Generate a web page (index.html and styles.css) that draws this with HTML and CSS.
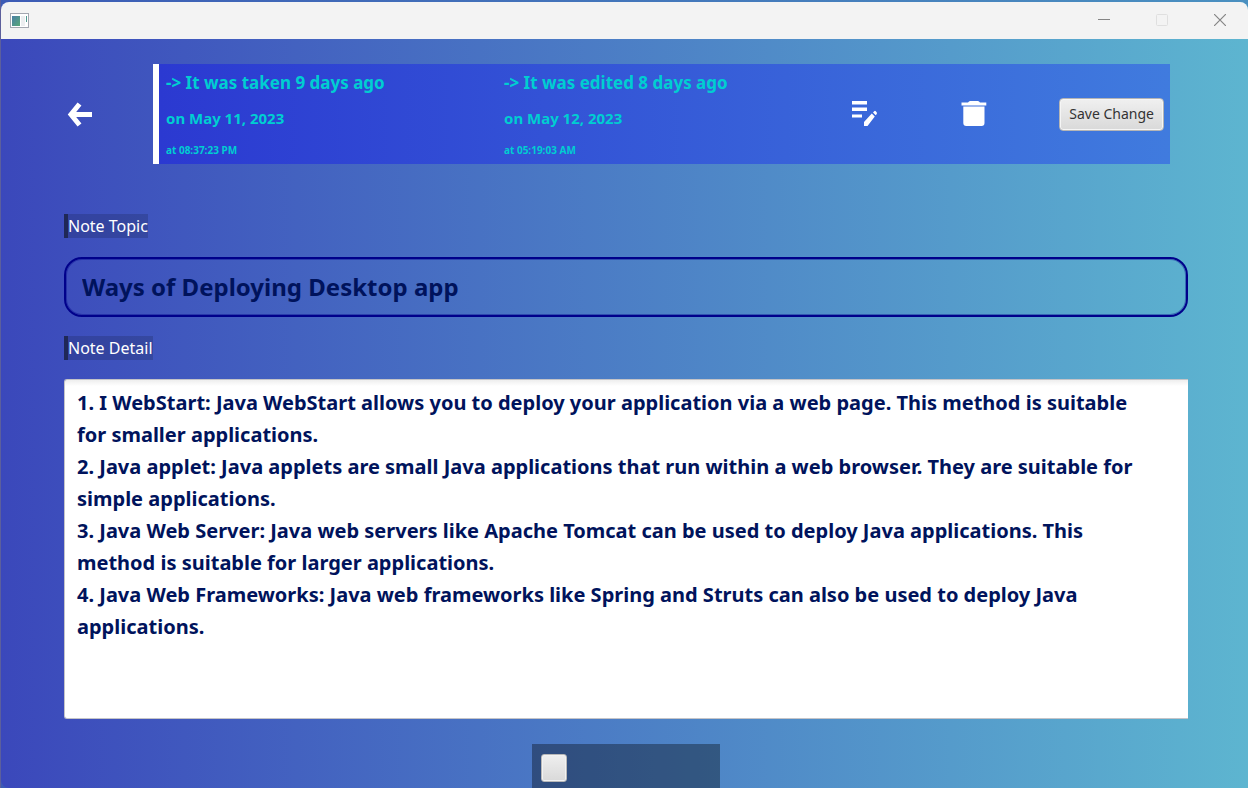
FILE: index.html
```html
<!DOCTYPE html>
<html lang="en">
<head>
<meta charset="utf-8">
<title>Note</title>
<link rel="stylesheet" href="styles.css">
</head>
<body>
<div class="window">
  <header class="titlebar">
    <svg class="app-icon" width="20" height="17" viewBox="0 0 20 17" aria-hidden="true">
      <defs><linearGradient id="pane" x1="0" y1="0" x2="1" y2="1"><stop offset="0" stop-color="#4a7fa5"/><stop offset="1" stop-color="#58a878"/></linearGradient></defs>
      <rect x=".5" y="1.500" width="18" height="14" fill="#fff" stroke="#a3a7b0"/>
      <rect x="2" y="4" width="8" height="10" fill="url(#pane)"/>
      <rect x="11" y="4" width="4" height="10" fill="#eceef0"/>
      <rect x="16" y="4" width="1" height="6" fill="#4f9a90"/>
    </svg>
    <div class="window-controls">
      <button type="button" aria-label="Minimize"><svg width="12" height="12" viewBox="0 0 12 12"><path d="M0 5.500H12" stroke="#858585"/></svg></button>
      <button type="button" aria-label="Maximize" disabled><svg width="12" height="12" viewBox="0 0 12 12"><rect x=".5" y=".5" width="11" height="11" rx="1" fill="none" stroke="#dfdfdf"/></svg></button>
      <button type="button" aria-label="Close"><svg width="12" height="12" viewBox="0 0 12 12"><path d="M0 0L12 12M12 0L0 12" stroke="#858585" stroke-width="1.200"/></svg></button>
    </div>
  </header>
  <main class="content">
    <div class="toolbar">
      <button class="icon-button" type="button" aria-label="Back">
        <svg width="26" height="26" viewBox="0 0 26 26"><path d="M25 13.500H5M12.500 3L4 13.500L12.500 24" fill="none" stroke="#fff" stroke-width="5"/></svg>
      </button>
      <section class="info">
        <div class="stamp">
          <p class="ago">-&gt; It was taken 9 days ago</p>
          <p class="date">on May 11, 2023</p>
          <p class="time">at 08:37:23 PM</p>
        </div>
        <div class="stamp">
          <p class="ago">-&gt; It was edited 8 days ago</p>
          <p class="date">on May 12, 2023</p>
          <p class="time">at 05:19:03 AM</p>
        </div>
        <div class="actions">
          <button class="icon-button edit" type="button" aria-label="Edit note">
            <svg width="26" height="26" viewBox="0 0 26 26" fill="#fff"><path d="M0 0H15V3.500H0ZM0 6.500H15V10H0ZM0 13.500H10V16.500H0ZM12 25V21L19.800 12.500L22.800 15.500L15.500 25ZM21 11.500L22.200 10.200Q23 9.500 23.800 10.200L24.800 11.500Q25.300 12.300 24.600 13.200L23.700 14.300Z"/></svg>
          </button>
          <button class="icon-button" type="button" aria-label="Delete note">
            <svg width="26" height="26" viewBox="0 0 26 26" fill="#fff"><path d="M.5 1.500H7Q8 0 9 0H17Q18 0 19 1.500H25.300V4.500H.5ZM2.300 5.600H23.500V22Q23.500 25 20.500 25H5.300Q2.300 25 2.300 22Z"/></svg>
          </button>
          <button class="save" type="button">Save Change</button>
        </div>
      </section>
    </div>
    <label class="tag" for="topic">Note Topic</label>
    <input class="topic" id="topic" type="text" value="Ways of Deploying Desktop app">
    <label class="tag" for="detail">Note Detail</label>
    <textarea class="detail" id="detail" spellcheck="false">1. I WebStart: Java WebStart allows you to deploy your application via a web page. This method is suitable for smaller applications.
2. Java applet: Java applets are small Java applications that run within a web browser. They are suitable for simple applications.
3. Java Web Server: Java web servers like Apache Tomcat can be used to deploy Java applications. This method is suitable for larger applications.
4. Java Web Frameworks: Java web frameworks like Spring and Struts can also be used to deploy Java applications.</textarea>
    <footer class="dock">
      <button class="dock-button" type="button" aria-label="Action"></button>
    </footer>
  </main>
</div>
</body>
</html>
```
FILE: styles.css
```css
* { box-sizing: border-box; }

body {
  margin: 0;
  min-height: 100vh;
  padding: 2px 0 0 1px;
  display: flex;
  background: linear-gradient(90deg, #5c5f9c 1px, #3c5bb5 1px, #4a90c0);
  font-family: "Noto Sans", "Open Sans", sans-serif;
}

button { font: inherit; }

.window {
  flex: 1;
  display: flex;
  flex-direction: column;
  border-radius: 8px 8px 0 8px;
  overflow: hidden;
  background: linear-gradient(90deg, #3b48bb, #5db5d0);
}

.titlebar {
  display: flex;
  align-items: center;
  justify-content: space-between;
  height: 37px;
  padding-left: 9px;
  background: #f3f3f3;
}

.window-controls { display: flex; }

.window-controls button {
  display: grid;
  place-items: center;
  width: 58px;
  height: 36px;
  padding: 0 0 2px 2px;
  border: 0;
  background: none;
}

.content {
  flex: 1;
  display: flex;
  flex-direction: column;
  align-items: flex-start;
  padding: 25px 60px 0 63px;
}

.toolbar {
  align-self: stretch;
  display: flex;
  align-items: center;
  gap: 60px;
  margin-bottom: 50px;
  padding: 0 18px 0 3px;
}

.icon-button {
  display: block;
  padding: 0;
  border: 0;
  background: none;
}

.icon-button svg { display: block; }

.info {
  flex: 1;
  display: flex;
  height: 100px;
  padding: 0 6px 0 7px;
  border-left: 6px solid #fff;
  background: linear-gradient(90deg, #2b39d1, #407bde);
  color: #00ced1;
}

.stamp {
  flex: 0 0 338px;
  font-weight: 700;
}

.stamp p { margin: 0; }

.ago { font-size: 17px; line-height: 38px; }
.date { font-size: 15px; line-height: 32px; }
.time { font-size: 10px; line-height: 32px; }

.actions {
  flex: 1;
  display: flex;
  align-items: center;
  justify-content: flex-end;
  gap: 72px;
}

.edit { padding-right: 11px; }

.save {
  height: 33px;
  padding: 0 9px 2px;
  border: 1px solid #b5b5b5;
  border-radius: 4px;
  background: linear-gradient(#f0f0f0, #d9d9d9);
  box-shadow: inset 0 0 0 1px #f5f5f5;
  color: #333;
  font-size: 14px;
}

.tag {
  border-left: 4px solid #1f2857;
  background: #00000026;
  color: #fff;
  font-size: 16px;
  line-height: 24px;
}

.topic {
  width: 100%;
  height: 60px;
  margin: 19px 0;
  padding: 0 16px 2px;
  border: 2px solid #00008b;
  border-radius: 18px;
  outline: none;
  background: none;
  box-shadow: inset 0 0 0 1px #00008b60;
  color: #00135c;
  font: 700 24px "Noto Sans", "Open Sans", sans-serif;
}

.detail {
  flex: 1;
  width: 100%;
  min-height: 340px;
  margin: 19px 0 25px;
  padding: 7px 30px 6px 12px;
  border: 1px solid #c4c4c8;
  border-right: 0;
  border-radius: 3px 0 0 3px;
  outline: none;
  resize: none;
  background: linear-gradient(#eee, #fff 6px);
  color: #00135c;
  font: 700 20px/32px "Noto Sans", "Open Sans", sans-serif;
}

.dock {
  align-self: center;
  width: 188px;
  height: 44px;
  padding: 10px 9px 0;
  background: #00000059;
}

.dock-button {
  display: block;
  width: 26px;
  height: 28px;
  padding: 0;
  border: 1px solid #b8b8b8;
  border-radius: 3px;
  background: linear-gradient(#efefef, #d9d9d9);
  box-shadow: inset 0 0 0 1px #f2f2f2;
}
```
